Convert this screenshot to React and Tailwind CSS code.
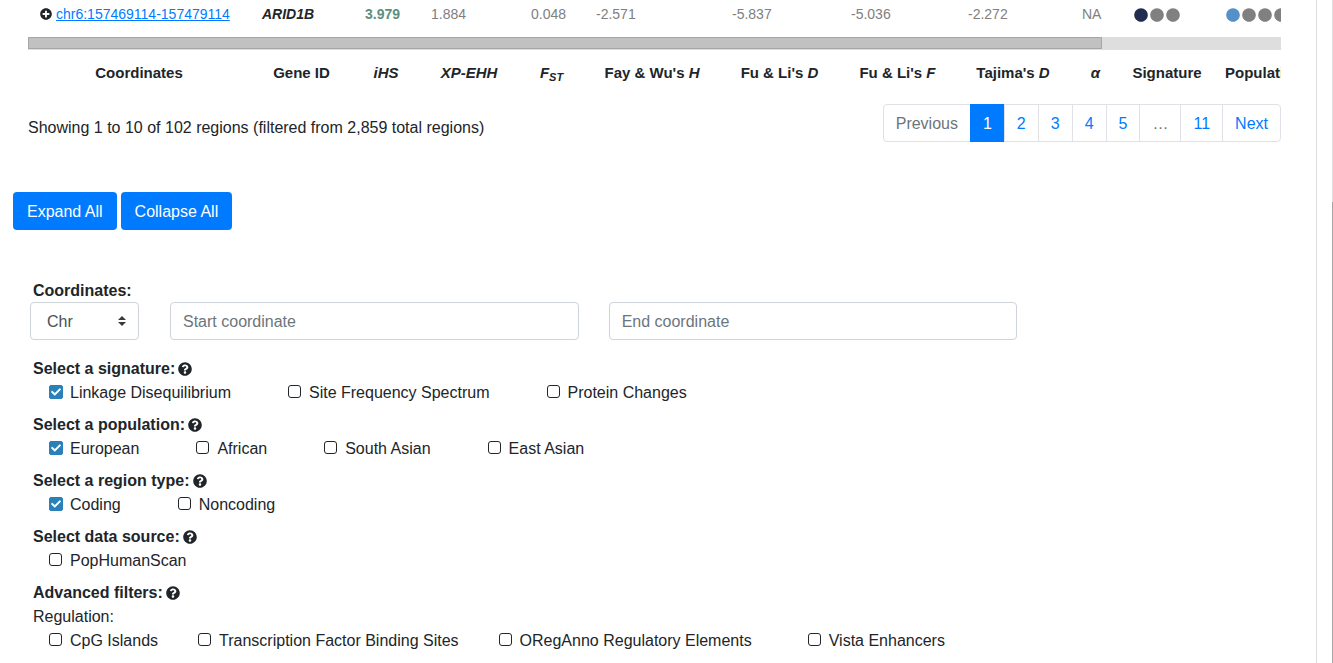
import React from "react";
import { FaPlusCircle, FaQuestionCircle, FaCircle, FaCheck } from "react-icons/fa";

const columnWidths = [222, 103, 66, 100, 65, 136, 119, 117, 114, 51, 92, 110];

function Columns() {
  return (
    <colgroup>
      {columnWidths.map((w, i) => (
        <col key={i} style={{ width: w }} />
      ))}
    </colgroup>
  );
}

function Dots({ colors }) {
  return (
    <span className="flex gap-0.5 pt-0.5 pl-px">
      {colors.map((c, i) => (
        <FaCircle key={i} size={14} className={"shrink-0 " + c} />
      ))}
    </span>
  );
}

function ResultsTable() {
  const gray = "text-[#808080]";
  return (
    <div className="overflow-hidden">
      <table className="w-[1295px] table-fixed text-left text-[14px] leading-6">
        <Columns />
        <tbody>
          <tr className="[&>td]:pt-0.5 [&>td]:pb-[11px] [&>td]:pl-3 [&>td]:whitespace-nowrap text-[#808080]">
            <td>
              <span className="flex items-center gap-1">
                <button type="button" aria-label="Show details" className="text-[#212529]">
                  <FaPlusCircle size={12} />
                </button>
                <a href="#region" className="text-[#007bff] underline">
                  chr6:157469114-157479114
                </a>
              </span>
            </td>
            <td className="font-bold text-[#212529] italic">ARID1B</td>
            <td className="font-bold text-[#5b8f80]">3.979</td>
            <td>1.884</td>
            <td>0.048</td>
            <td>-2.571</td>
            <td>-5.837</td>
            <td>-5.036</td>
            <td>-2.272</td>
            <td>NA</td>
            <td>
              <Dots colors={["text-[#202c50]", gray, gray]} />
            </td>
            <td>
              <Dots colors={["text-[#5591c8]", gray, gray, gray]} />
            </td>
          </tr>
        </tbody>
      </table>
      <div className="h-[13px] bg-[#dedede] pb-px">
        <div className="h-full w-6/7 border border-[#a6a6a6] bg-[#c1c1c1]" />
      </div>
      <table className="w-[1295px] table-fixed text-center text-[15px] leading-6">
        <Columns />
        <tbody>
          <tr className="[&>th]:pt-[11px] [&>th]:whitespace-nowrap">
            <th>Coordinates</th>
            <th>Gene ID</th>
            <th className="italic">iHS</th>
            <th className="italic">XP-EHH</th>
            <th className="italic">
              F<sub className="text-[11px]">ST</sub>
            </th>
            <th>
              Fay &amp; Wu's <i>H</i>
            </th>
            <th>
              Fu &amp; Li's <i>D</i>
            </th>
            <th>
              Fu &amp; Li's <i>F</i>
            </th>
            <th>
              Tajima's <i>D</i>
            </th>
            <th className="italic">α</th>
            <th>Signature</th>
            <th className="pl-3 text-left">Population</th>
          </tr>
        </tbody>
      </table>
    </div>
  );
}

function Pagination() {
  const base = "-ml-px block border px-3 pt-[9px] pb-[7px] leading-5 ";
  const link = base + "border-[#dee2e6] text-[#007bff]";
  const muted = base + "border-[#dee2e6] text-[#6c757d]";
  return (
    <nav aria-label="Result pages">
      <ul className="flex">
        <li>
          <span className={muted + " rounded-l"}>Previous</span>
        </li>
        <li>
          <a href="#1" aria-current="page" className={base + "border-[#007bff] bg-[#007bff] text-white"}>
            1
          </a>
        </li>
        {["2", "3", "4", "5"].map((n) => (
          <li key={n}>
            <a href={"#" + n} className={link}>
              {n}
            </a>
          </li>
        ))}
        <li>
          <span className={muted}>…</span>
        </li>
        <li>
          <a href="#11" className={link}>
            11
          </a>
        </li>
        <li>
          <a href="#next" className={link + " rounded-r"}>
            Next
          </a>
        </li>
      </ul>
    </nav>
  );
}

function Option({ label, checked, className = "" }) {
  return (
    <label className={"flex items-center gap-[7px] " + className}>
      <span className="mb-0.5 grid h-3.5 w-3.5 items-start">
        <input
          type="checkbox"
          defaultChecked={checked}
          className="peer col-start-1 row-start-1 size-[13px] appearance-none rounded-[3px] border border-[#212529] checked:size-3.5 checked:rounded-[2px] checked:border-[#2a80b9] checked:bg-[#2a80b9]"
        />
        <FaCheck
          size={10}
          className="pointer-events-none invisible col-start-1 row-start-1 self-center justify-self-center text-white peer-checked:visible"
        />
      </span>
      {label}
    </label>
  );
}

function Group({ title, note, gap = "gap-x-[57px]", children }) {
  return (
    <fieldset className="mb-2">
      <legend className="flex items-center gap-[3px] font-bold">
        {title}
        <button type="button" aria-label={"Help: " + title}>
          <FaQuestionCircle size={14} />
        </button>
      </legend>
      {note && <p>{note}</p>}
      <div className={"flex flex-wrap pl-4 " + gap}>{children}</div>
    </fieldset>
  );
}

const button = "rounded bg-[#007bff] px-3.5 pt-2 pb-1.5 text-white";
const field =
  "h-[38px] w-full rounded border border-[#ced4da] bg-white px-3 pt-0.5 text-[#495057] placeholder:text-[#6c757d]";

export default function App() {
  return (
    <div className="flex min-h-screen bg-white font-['Liberation_Sans',Arial,sans-serif] text-[16px] leading-6 text-[#212529]">
      <main className="min-w-0 flex-1 border-r border-[#dddddd]">
        <section className="pr-[35px] pl-7">
          <ResultsTable />
          <div className="mt-[19px] flex items-start justify-between">
            <p className="pt-3">Showing 1 to 10 of 102 regions (filtered from 2,859 total regions)</p>
            <Pagination />
          </div>
        </section>

        <div className="mt-[50px] flex gap-1 pl-[13px]">
          <button type="button" className={button}>
            Expand All
          </button>
          <button type="button" className={button}>
            Collapse All
          </button>
        </div>

        <form className="mt-12">
          <h2 id="coords" className="pt-0.5 pl-[33px] leading-[22px] font-bold">
            Coordinates:
          </h2>
          <div className="flex" role="group" aria-labelledby="coords">
            <div className="relative mr-4 ml-[30px] w-[109px] shrink-0">
              <select
                aria-label="Chromosome"
                className="h-[38px] w-full appearance-none rounded border border-[#ced4da] bg-white pt-0.5 pl-4 text-[#495057]"
              >
                <option>Chr</option>
              </select>
              <svg
                viewBox="0 0 4 5"
                className="pointer-events-none absolute top-[14px] right-[13px] h-2.5 w-2"
                fill="#343a40"
                aria-hidden="true"
              >
                <path d="M2 0L0 2h4zm0 5L0 3h4z" />
              </svg>
            </div>
            <div className="w-1/3 px-[15px]">
              <input aria-label="Start coordinate" placeholder="Start coordinate" className={field} />
            </div>
            <div className="w-1/3 px-[15px]">
              <input aria-label="End coordinate" placeholder="End coordinate" className={field} />
            </div>
          </div>

          <div className="mt-[17px] pl-[33px]">
            <Group title="Select a signature:">
              <Option label="Linkage Disequilibrium" checked />
              <Option label="Site Frequency Spectrum" />
              <Option label="Protein Changes" />
            </Group>
            <Group title="Select a population:">
              <Option label="European" checked />
              <Option label="African" />
              <Option label="South Asian" />
              <Option label="East Asian" />
            </Group>
            <Group title="Select a region type:">
              <Option label="Coding" checked />
              <Option label="Noncoding" />
            </Group>
            <Group title="Select data source:">
              <Option label="PopHumanScan" />
            </Group>
            <Group title="Advanced filters:" note="Regulation:" gap="gap-x-10">
              <Option label="CpG Islands" />
              <Option label="Transcription Factor Binding Sites" />
              <Option label="ORegAnno Regulatory Elements" className="mr-4" />
              <Option label="Vista Enhancers" />
            </Group>
          </div>
        </form>
      </main>
      <div className="ml-[15px] flex w-px flex-col bg-[#a6a6a6]">
        <div className="h-[202px] bg-[#dedede]" />
      </div>
    </div>
  );
}
